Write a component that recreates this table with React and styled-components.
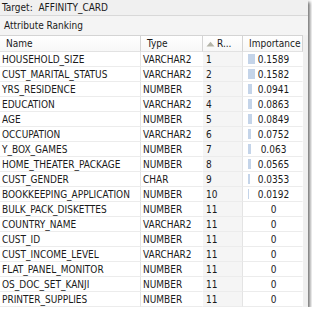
import React from "react";
import styled, { createGlobalStyle } from "styled-components";

const GlobalStyle = createGlobalStyle`
  html, body {
    margin: 0;
    padding: 0;
    background: #ffffff;
  }
  body {
    font-family: "DejaVu Sans Condensed", "DejaVu Sans", sans-serif;
    font-stretch: condensed;
    font-size: 10px;
    color: #1a1a1a;
  }
`;

const Frame = styled.div`
  width: 308px;
  height: 307px;
  background: #f0f0f0;
  box-shadow: 2px 2px 3px rgba(0, 0, 0, 0.55);
  display: flex;
  flex-direction: column;
  overflow: hidden;
`;

const TargetBar = styled.div`
  height: 15px;
  border-bottom: 1px solid #d8d8d8;
  display: flex;
  align-items: center;
  padding-left: 2px;
  background: #f0f0f0;
`;

const TabBar = styled.div`
  height: 20px;
  display: flex;
  align-items: center;
  padding-left: 4px;
  background: #f4f4f4;
`;

const Table = styled.div`
  display: grid;
  grid-template-columns: 141px 62px 40px 60px;
  width: 303px;
  background: #ffffff;
`;

const HeadCell = styled.div`
  height: 15px;
  border-top: 1px solid #d4d4d4;
  border-right: 1px solid #d4d4d4;
  border-bottom: 1px solid #e2e2e2;
  display: flex;
  align-items: center;
  padding-left: ${(p) => (p.$sorted ? "3px" : "6px")};
  background: linear-gradient(#ffffff, #f7f7f7);
  gap: 2px;
  white-space: nowrap;
  overflow: hidden;
`;

const Cell = styled.div`
  height: 14px;
  border-bottom: 1px solid #ececec;
  border-right: 1px solid ${(p) => (p.$line ? "#e4e4e4" : "transparent")};
  display: flex;
  align-items: center;
  padding-left: ${(p) => p.$pad || "2px"};
  background: ${(p) => (p.$shade ? "#f5f5f5" : "#ffffff")};
  white-space: nowrap;
  overflow: hidden;
`;

const ImpCell = styled(Cell)`
  position: relative;
  justify-content: center;
  padding-left: 0;
`;

const Bar = styled.div`
  position: absolute;
  left: 5px;
  top: 2px;
  bottom: 2px;
  background: #c4d4e9;
`;

const ImpValue = styled.span`
  position: relative;
  padding-left: 2px;
`;

const SortArrow = styled.svg`
  flex: none;
`;

const rows = [
  ["HOUSEHOLD_SIZE", "VARCHAR2", 1, "0.1589"],
  ["CUST_MARITAL_STATUS", "VARCHAR2", 2, "0.1582"],
  ["YRS_RESIDENCE", "NUMBER", 3, "0.0941"],
  ["EDUCATION", "VARCHAR2", 4, "0.0863"],
  ["AGE", "NUMBER", 5, "0.0849"],
  ["OCCUPATION", "VARCHAR2", 6, "0.0752"],
  ["Y_BOX_GAMES", "NUMBER", 7, "0.063"],
  ["HOME_THEATER_PACKAGE", "NUMBER", 8, "0.0565"],
  ["CUST_GENDER", "CHAR", 9, "0.0353"],
  ["BOOKKEEPING_APPLICATION", "NUMBER", 10, "0.0192"],
  ["BULK_PACK_DISKETTES", "NUMBER", 11, "0"],
  ["COUNTRY_NAME", "VARCHAR2", 11, "0"],
  ["CUST_ID", "NUMBER", 11, "0"],
  ["CUST_INCOME_LEVEL", "VARCHAR2", 11, "0"],
  ["FLAT_PANEL_MONITOR", "NUMBER", 11, "0"],
  ["OS_DOC_SET_KANJI", "NUMBER", 11, "0"],
  ["PRINTER_SUPPLIES", "NUMBER", 11, "0"],
];

function App() {
  return (
    <>
      <GlobalStyle />
      <Frame>
        <TargetBar>Target:&nbsp; AFFINITY_CARD</TargetBar>
        <TabBar>Attribute Ranking</TabBar>
        <Table>
          <HeadCell>Name</HeadCell>
          <HeadCell>Type</HeadCell>
          <HeadCell $sorted>
            <SortArrow width="9" height="6" viewBox="0 0 9 6">
              <path d="M0.5 5.5 L4.5 0.8 L8.5 5.5 Z" fill="#b4b4a8" />
            </SortArrow>
            R...
          </HeadCell>
          <HeadCell>Importance</HeadCell>
          {rows.map(([name, type, rank, imp]) => {
            const v = parseFloat(imp);
            return (
              <React.Fragment key={name}>
                <Cell $line>{name}</Cell>
                <Cell $pad="2px">{type}</Cell>
                <Cell $shade $line $pad="3px">{rank}</Cell>
                <ImpCell>
                  {v > 0 && <Bar style={{ width: Math.max(1, Math.round(v * 45)) + "px" }} />}
                  <ImpValue>{imp}</ImpValue>
                </ImpCell>
              </React.Fragment>
            );
          })}
        </Table>
      </Frame>
    </>
  );
}

export default App;
